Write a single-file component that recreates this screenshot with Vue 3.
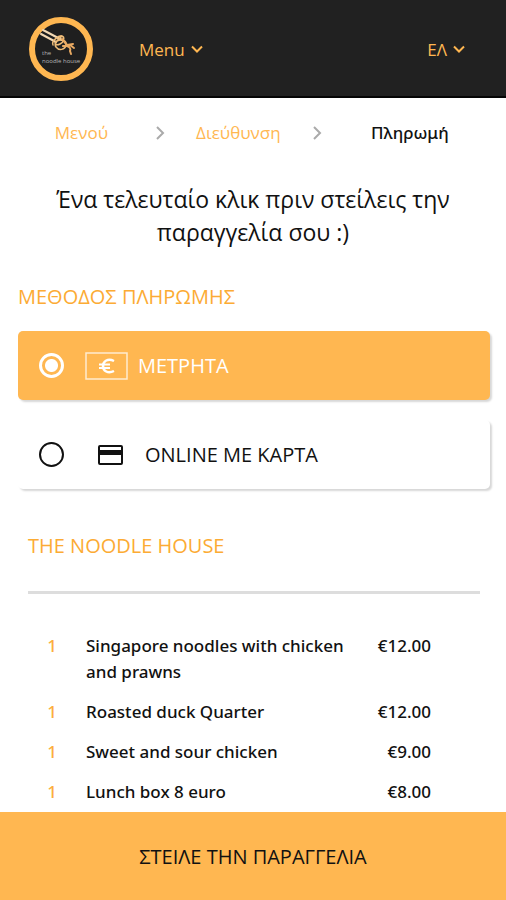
<template>
  <div class="checkout">
    <header class="topbar">
      <a href="#" class="logo" aria-label="The Noodle House">
        <svg viewBox="0 0 64 64" width="64" height="64">
          <circle cx="32" cy="32" r="29" fill="#1f1f1f" stroke="#ffb751" stroke-width="6" />
          <g fill="none" stroke-linecap="round" stroke-linejoin="round">
            <path d="M14 13l19 10M12 17l15 8" stroke="#f3d9b4" stroke-width="2" />
            <path d="M24 28c-2-4 6-10 9-9s2 6-2 8-7-1-3-3 10-1 9 4-7 6-10 2 3-8 6-11" stroke="#eebc78" stroke-width="1.5" />
            <path d="M33 22l5 6 6-1M34 29l7-1 4 3M38 29c3 1 4 3 3 5l1 3" stroke="#e9aa62" stroke-width="2" />
          </g>
          <text x="13" y="38" class="logo-text">the</text>
          <text x="13" y="46" class="logo-text">noodle house</text>
        </svg>
      </a>
      <button type="button" class="nav-button">
        Menu
        <svg viewBox="0 0 12 8" width="12" height="8"><path d="M1 1.5l5 5 5-5" /></svg>
      </button>
      <button type="button" class="nav-button language">
        ΕΛ
        <svg viewBox="0 0 12 8" width="12" height="8"><path d="M1 1.5l5 5 5-5" /></svg>
      </button>
    </header>

    <main class="content">
      <nav class="steps">
        <template v-for="(step, index) in steps" :key="step">
          <svg v-if="index > 0" class="step-arrow" viewBox="0 0 10 16" width="10" height="16">
            <path d="M2 2l6 6-6 6" />
          </svg>
          <a href="#" class="step" :class="{ current: index === steps.length - 1 }">{{ step }}</a>
        </template>
      </nav>

      <h1 class="title">Ένα τελευταίο κλικ πριν στείλεις την παραγγελία σου :)</h1>

      <section class="payment">
        <h2 class="section-title">ΜΕΘΟΔΟΣ ΠΛΗΡΩΜΗΣ</h2>
        <label class="method" :class="{ selected: method === 'cash' }">
          <input v-model="method" type="radio" name="method" value="cash" class="radio" />
          <span class="method-icon">
            <svg viewBox="0 0 44 30" width="44" height="30" fill="none" stroke="currentColor">
              <rect x="2" y="2" width="41" height="26" stroke="#ffeccf" stroke-width="1.5" />
              <path d="M30 10c-6-3-11 0-11 5s5 8 11 5" stroke-width="2.5" />
              <path d="M15 13.5h11M15 17h11" stroke-width="1.8" />
            </svg>
          </span>
          <span class="method-name">ΜΕΤΡΗΤΑ</span>
        </label>
        <label class="method" :class="{ selected: method === 'card' }">
          <input v-model="method" type="radio" name="method" value="card" class="radio" />
          <span class="method-icon card">
            <svg viewBox="0 0 26 20" width="26" height="20">
              <rect x="2" y="1" width="23" height="18" rx="1" fill="none" stroke="currentColor" stroke-width="2" />
              <path d="M2 5h23v5H2z" fill="currentColor" />
            </svg>
          </span>
          <span class="method-name">ONLINE ΜΕ ΚΑΡΤΑ</span>
        </label>
      </section>

      <section class="order">
        <h2 class="section-title">THE NOODLE HOUSE</h2>
        <table class="items">
          <tbody>
            <tr v-for="item in items" :key="item.name">
              <td class="quantity">{{ item.quantity }}</td>
              <td class="name">{{ item.name }}</td>
              <td class="price">€{{ item.price.toFixed(2) }}</td>
            </tr>
          </tbody>
        </table>
      </section>
    </main>

    <button type="submit" class="submit">ΣΤΕΙΛΕ ΤΗΝ ΠΑΡΑΓΓΕΛΙΑ</button>
  </div>
</template>

<script setup>
import { ref } from 'vue'

const steps = ['Μενού', 'Διεύθυνση', 'Πληρωμή']

const method = ref('cash')

const items = [
  { quantity: 1, name: 'Singapore noodles with chicken and prawns', price: 12 },
  { quantity: 1, name: 'Roasted duck Quarter', price: 12 },
  { quantity: 1, name: 'Sweet and sour chicken', price: 9 },
  { quantity: 1, name: 'Lunch box 8 euro', price: 8 }
]
</script>

<style>
body {
  margin: 0;
  background: #fff;
}
</style>

<style scoped>
.checkout {
  display: flex;
  flex-direction: column;
  min-height: 100vh;
  font-family: "Open Sans", "Noto Sans", sans-serif;
  font-size: 17px;
  color: #111;
}

.topbar {
  display: flex;
  align-items: center;
  padding: 17px 41px 15px 29px;
  background: #212121;
  border-bottom: 2px solid #050505;
}

.logo {
  display: flex;
  margin-right: 46px;
}

.logo-text {
  font-size: 6px;
  fill: #b5b5b5;
}

.nav-button {
  display: flex;
  align-items: center;
  gap: 6px;
  padding: 0;
  border: 0;
  background: none;
  font: inherit;
  color: #ffb751;
  cursor: pointer;
}

.nav-button path {
  fill: none;
  stroke: currentColor;
  stroke-width: 2;
}

.language {
  margin-left: auto;
}

.content {
  flex: 1;
}

.steps {
  display: grid;
  grid-template-columns: 5fr 10px 5fr 10px 6fr;
  align-items: center;
  padding: 22px 8px 0;
  line-height: 26px;
}

.step {
  text-align: center;
  text-decoration: none;
  color: #ffb751;
}

.step.current {
  font-family: "Noto Sans", sans-serif;
  font-weight: 500;
  color: #111;
}

.step-arrow path {
  fill: none;
  stroke: #aaa;
  stroke-width: 2;
}

.title {
  margin: 0;
  padding: 37px 40px 0;
  font-size: 23px;
  font-weight: 500;
  line-height: 33px;
  text-align: center;
}

.section-title {
  margin: 0;
  font-size: 20px;
  font-weight: 500;
  line-height: 26px;
  color: #fcab34;
}

.payment {
  padding: 35px 16px 0 18px;
}

.method {
  display: flex;
  align-items: center;
  height: 69px;
  margin-top: 20px;
  padding: 0 21px;
  border-radius: 5px;
  box-shadow: 2px 2px 2px rgba(0, 0, 0, 0.16);
  font-size: 20px;
  cursor: pointer;
}

.section-title + .method {
  margin-top: 21px;
}

.method.selected {
  background: #ffb751;
  color: #fff;
}

.radio {
  appearance: none;
  box-sizing: border-box;
  width: 25px;
  height: 25px;
  margin: 0;
  border: 2px solid currentColor;
  border-radius: 50%;
  color: inherit;
}

.radio:checked {
  border-width: 3px;
  background: radial-gradient(circle, currentColor 6px, transparent 7px);
}

.method-icon {
  display: flex;
  margin: 0 10px 0 20px;
}

.method-icon.card {
  margin: 0 22px 0 33px;
}

.order {
  padding: 44px 26px 0 28px;
}

.items {
  width: 100%;
  margin-top: 32px;
  padding: 32px 49px 0 0;
  border-top: 3px solid #ddd;
  border-spacing: 0;
  font-family: "Noto Sans", sans-serif;
  line-height: 26px;
}

.items td {
  padding: 7px 0;
  vertical-align: top;
  font-weight: 500;
}

.items .quantity {
  width: 48px;
  text-align: center;
  color: #fcae3c;
}

.items .name {
  padding: 7px 20px 7px 10px;
}

.items .price {
  text-align: right;
}

.submit {
  position: sticky;
  bottom: 0;
  height: 88px;
  border: 0;
  background: #ffb751;
  font: inherit;
  font-size: 20px;
  color: #111;
  cursor: pointer;
}
</style>
